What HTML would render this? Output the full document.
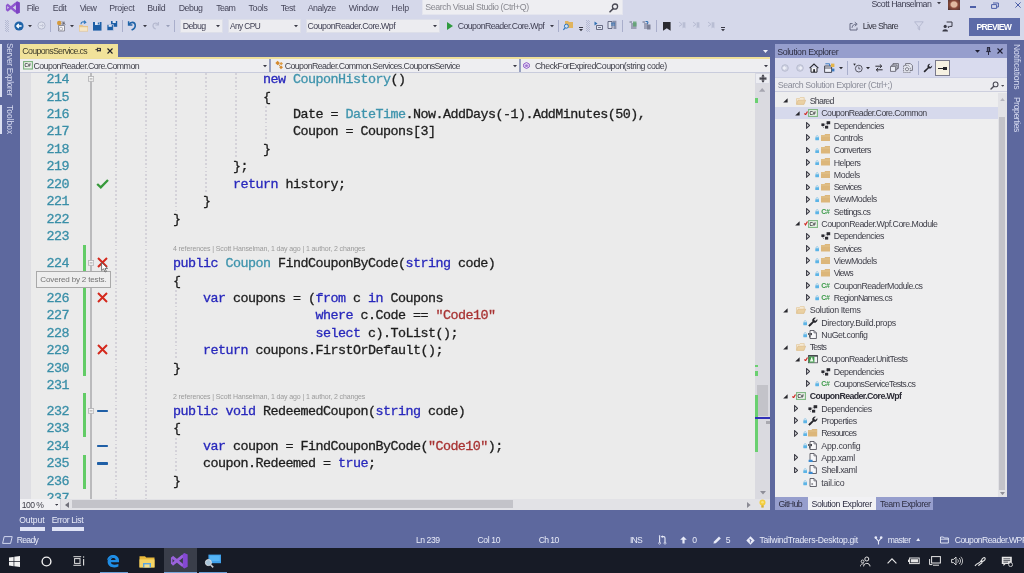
<!DOCTYPE html><html><head><meta charset="utf-8"><title>VS</title><style>
*{margin:0;padding:0;box-sizing:border-box}
html,body{width:1024px;height:573px;overflow:hidden;background:#5d689e;font-family:"Liberation Sans",sans-serif;}
body{position:relative;filter:blur(0.5px)}
.a{position:absolute}
.t{position:absolute;white-space:nowrap;line-height:1}
#top{left:0;top:0;width:1024px;height:39.6px;background:#d5d8ea}
.menu{font-size:8.6px;color:#2a2a3a;top:4px;letter-spacing:-0.15px}
.code{font-family:"Liberation Mono",monospace;font-size:13.4px;letter-spacing:-0.54px;white-space:pre;line-height:17.5px;color:#1e1e1e;-webkit-text-stroke:0.3px}
.ln{color:#3a8fa8}
.k{color:#2828bc}.ty{color:#3f94ad}.s{color:#a83232}
.lens{font-size:7px;color:#9a9a9a;letter-spacing:-0.12px}
.tree{font-size:8.8px;color:#2c2c34;letter-spacing:-0.2px}
.sb{font-size:8.4px;color:#e8ebf8;letter-spacing:-0.15px}
</style></head><body><div class="a" id="top"></div>
<svg class="a" style="left:0;top:0" width="24" height="16" viewBox="0 0 24 16"><path d="M6.9 4.4 L16.2 11.9 M6.9 10.9 L16.2 3.3" stroke="#9058cf" stroke-width="2.5" fill="none"/><path d="M6.6 4.8 V10.4" stroke="#9058cf" stroke-width="1.4"/><path d="M15.9 1.9 L17.1 1.2 L19.9 2.5 V12.7 L17.1 14 L15.9 13.3 Z" fill="#7d43c4"/></svg>
<div class="t " style="left:26.70px;top:4.1px;font-size:8.8px;letter-spacing:-0.477px;color:#46465a;">File</div>
<div class="t " style="left:52.70px;top:4.1px;font-size:8.8px;letter-spacing:-0.388px;color:#46465a;">Edit</div>
<div class="t " style="left:79.70px;top:4.1px;font-size:8.8px;letter-spacing:-0.555px;color:#46465a;">View</div>
<div class="t " style="left:109.20px;top:4.1px;font-size:8.8px;letter-spacing:-0.315px;color:#46465a;">Project</div>
<div class="t " style="left:147.20px;top:4.1px;font-size:8.8px;letter-spacing:-0.267px;color:#46465a;">Build</div>
<div class="t " style="left:178.70px;top:4.1px;font-size:8.8px;letter-spacing:-0.421px;color:#46465a;">Debug</div>
<div class="t " style="left:216.20px;top:4.1px;font-size:8.8px;letter-spacing:-0.590px;color:#46465a;">Team</div>
<div class="t " style="left:248.45px;top:4.1px;font-size:8.8px;letter-spacing:-0.261px;color:#46465a;">Tools</div>
<div class="t " style="left:280.70px;top:4.1px;font-size:8.8px;letter-spacing:-0.463px;color:#46465a;">Test</div>
<div class="t " style="left:307.70px;top:4.1px;font-size:8.8px;letter-spacing:-0.468px;color:#46465a;">Analyze</div>
<div class="t " style="left:348.70px;top:4.1px;font-size:8.8px;letter-spacing:-0.260px;color:#46465a;">Window</div>
<div class="t " style="left:391.45px;top:4.1px;font-size:8.8px;letter-spacing:-0.116px;color:#46465a;">Help</div>
<div class="a" style="left:422.3px;top:0px;width:201px;height:15.2px;background:#eeeef2;border:1px solid #e4e5ee;border-top:none"></div>
<div class="t " style="left:425.30px;top:3.4px;font-size:8.8px;letter-spacing:-0.415px;color:#88888f;">Search Visual Studio (Ctrl+Q)</div>
<svg class="a" style="left:609px;top:3px" width="10" height="10" viewBox="0 0 10 10"><circle cx="6" cy="3.6" r="2.6" fill="none" stroke="#4a4a55" stroke-width="1.3"/><path d="M4.2 5.6 L1 8.8" stroke="#4a4a55" stroke-width="1.6" stroke-linecap="round"/></svg>
<svg class="a" style="left:5px;top:20px" width="4" height="12" viewBox="0 0 4 12"><rect x="0" y="0" width="1" height="1" fill="#b4b9d2"/><rect x="2" y="0" width="1" height="1" fill="#b4b9d2"/><rect x="1" y="1" width="1" height="1" fill="#b4b9d2"/><rect x="3" y="1" width="1" height="1" fill="#b4b9d2"/><rect x="0" y="2" width="1" height="1" fill="#b4b9d2"/><rect x="2" y="2" width="1" height="1" fill="#b4b9d2"/><rect x="1" y="3" width="1" height="1" fill="#b4b9d2"/><rect x="3" y="3" width="1" height="1" fill="#b4b9d2"/><rect x="0" y="4" width="1" height="1" fill="#b4b9d2"/><rect x="2" y="4" width="1" height="1" fill="#b4b9d2"/><rect x="1" y="5" width="1" height="1" fill="#b4b9d2"/><rect x="3" y="5" width="1" height="1" fill="#b4b9d2"/><rect x="0" y="6" width="1" height="1" fill="#b4b9d2"/><rect x="2" y="6" width="1" height="1" fill="#b4b9d2"/><rect x="1" y="7" width="1" height="1" fill="#b4b9d2"/><rect x="3" y="7" width="1" height="1" fill="#b4b9d2"/><rect x="0" y="8" width="1" height="1" fill="#b4b9d2"/><rect x="2" y="8" width="1" height="1" fill="#b4b9d2"/><rect x="1" y="9" width="1" height="1" fill="#b4b9d2"/><rect x="3" y="9" width="1" height="1" fill="#b4b9d2"/><rect x="0" y="10" width="1" height="1" fill="#b4b9d2"/><rect x="2" y="10" width="1" height="1" fill="#b4b9d2"/><rect x="1" y="11" width="1" height="1" fill="#b4b9d2"/><rect x="3" y="11" width="1" height="1" fill="#b4b9d2"/></svg>
<svg class="a" style="left:14px;top:21px" width="10" height="10" viewBox="0 0 10 10"><circle cx="5" cy="5" r="4.6" fill="#1f63a8"/><path d="M7.6 5 H3 M4.8 3 L2.8 5 L4.8 7" stroke="#fff" stroke-width="1.3" fill="none"/></svg>
<svg class="a" style="left:28px;top:25.2px" width="4" height="3" viewBox="0 0 4 3"><path d="M0 0 H4 L2.0 2.2 Z" fill="#3a3a46"/></svg>
<svg class="a" style="left:36.5px;top:21px" width="9" height="9" viewBox="0 0 9 9"><circle cx="4.5" cy="4.5" r="3.6" fill="#dfe2ee" stroke="#b4b8cc" stroke-width="1"/><path d="M2.6 4.5 H6.4 M5 3 L6.5 4.5 L5 6" stroke="#c2c5d6" stroke-width="0.9" fill="none"/></svg>
<div class="a" style="left:50px;top:19.6px;width:1px;height:12px;background:#a9aecb;"></div>
<svg class="a" style="left:56px;top:20px" width="10" height="12" viewBox="0 0 10 12"><circle cx="3.2" cy="3" r="2.2" fill="#d59a3c"/><path d="M2.5 5.5 H8.5 V11 H2.5 Z" fill="#f4f4f6" stroke="#7a7a86" stroke-width="0.8"/><path d="M6 1.5 L9.2 4.7 M8 1.5 V4 H5.6" stroke="#555560" stroke-width="0.9" fill="none"/><circle cx="5" cy="8.8" r="1.6" fill="none" stroke="#9a9aa6" stroke-width="0.7"/></svg>
<svg class="a" style="left:70px;top:25.2px" width="4" height="3" viewBox="0 0 4 3"><path d="M0 0 H4 L2.0 2.2 Z" fill="#3a3a46"/></svg>
<svg class="a" style="left:78px;top:20px" width="11" height="12" viewBox="0 0 11 12"><path d="M1 5 H4.5 L5.5 6 H10 V11.5 H1 Z" fill="#e6c48a"/><path d="M1.6 7.2 H9.4 V10.9 H1.6 Z" fill="#f5e6c6"/><path d="M3 4.2 C3 2 5 1.4 7.2 2.2 M6.2 0.6 L7.8 2.3 L6 3.6" stroke="#2f78bd" stroke-width="1.1" fill="none"/></svg>
<svg class="a" style="left:93px;top:21.7px" width="9" height="9" viewBox="0 0 9 9"><path d="M0 0 H8.5 V8.6 H0 Z" fill="#1c5ea6"/><path d="M2 0 H6.6 V3 H2 Z" fill="#dfe6f4"/><path d="M4.8 0.5 H5.9 V2.5 H4.8 Z" fill="#1c5ea6"/></svg>
<svg class="a" style="left:106.8px;top:21.4px" width="11" height="10" viewBox="0 0 11 10"><path d="M4 0 H10.2 V5.8 H4 Z" fill="#1c5ea6"/><path d="M5.6 0 H8.8 V2 H5.6 Z" fill="#dfe6f4"/><path d="M0 3.6 H6.4 V9.6 H0 Z" fill="#1c5ea6" stroke="#d5d8ea" stroke-width="0.7"/><path d="M1.6 3.9 H4.8 V5.8 H1.6 Z" fill="#dfe6f4"/></svg>
<div class="a" style="left:121.5px;top:19.6px;width:1px;height:12px;background:#a9aecb;"></div>
<svg class="a" style="left:127px;top:20px" width="10" height="11" viewBox="0 0 10 11"><path d="M1.6 1.2 V5 H5.4" stroke="#1f63a8" stroke-width="1.5" fill="none"/><path d="M2 4.6 C3.5 1.6 7.6 1.6 8.2 4.8 C8.6 7.2 6.8 9 4.6 10" stroke="#1f63a8" stroke-width="1.6" fill="none"/></svg>
<svg class="a" style="left:142.5px;top:25.2px" width="4" height="3" viewBox="0 0 4 3"><path d="M0 0 H4 L2.0 2.2 Z" fill="#3a3a46"/></svg>
<svg class="a" style="left:150.6px;top:21px" width="9" height="9" viewBox="0 0 9 9"><path d="M7.4 1 V4 H4.4" stroke="#b6bad0" stroke-width="1.1" fill="none"/><path d="M7 3.8 C6 1.4 2.4 1.6 2 4.2 C1.8 6 3 7.4 4.8 8" stroke="#b6bad0" stroke-width="1.2" fill="none"/></svg>
<svg class="a" style="left:166px;top:25px" width="4" height="3" viewBox="0 0 4 3"><path d="M0 0 H4 L2.0 2.2 Z" fill="#9aa0ba"/></svg>
<div class="a" style="left:174px;top:19.6px;width:1px;height:12px;background:#a9aecb;"></div>
<div class="a" style="left:180px;top:18.8px;width:42.5px;height:13.8px;background:#ececf0;border:1px solid #dddfe9"></div>
<div class="t " style="left:182.70px;top:21.6px;font-size:8.8px;letter-spacing:-0.608px;color:#404054;">Debug</div>
<svg class="a" style="left:215.9px;top:25.2px" width="4" height="3" viewBox="0 0 4 3"><path d="M0 0 H4 L2.0 2.2 Z" fill="#3a3a46"/></svg>
<div class="a" style="left:227.5px;top:18.8px;width:73.5px;height:13.8px;background:#ececf0;border:1px solid #dddfe9"></div>
<div class="t " style="left:229.90px;top:21.900000000000002px;font-size:8.3px;letter-spacing:-0.539px;color:#404054;">Any CPU</div>
<svg class="a" style="left:294.4px;top:25.2px" width="4" height="3" viewBox="0 0 4 3"><path d="M0 0 H4 L2.0 2.2 Z" fill="#3a3a46"/></svg>
<div class="a" style="left:306px;top:18.8px;width:134px;height:13.8px;background:#ececf0;border:1px solid #dddfe9"></div>
<div class="t " style="left:307.45px;top:21.6px;font-size:8.8px;letter-spacing:-0.528px;color:#404054;">CouponReader.Core.Wpf</div>
<svg class="a" style="left:433.4px;top:25.2px" width="4" height="3" viewBox="0 0 4 3"><path d="M0 0 H4 L2.0 2.2 Z" fill="#3a3a46"/></svg>
<svg class="a" style="left:446.5px;top:21.5px" width="6" height="8" viewBox="0 0 6 8"><path d="M0 0 L6 4 L0 8 Z" fill="#2f9a3f"/></svg>
<div class="t " style="left:457.70px;top:21.6px;font-size:8.8px;letter-spacing:-0.591px;color:#404054;">CouponReader.Core.Wpf</div>
<svg class="a" style="left:549.6px;top:25.2px" width="4" height="3" viewBox="0 0 4 3"><path d="M0 0 H4 L2.0 2.2 Z" fill="#3a3a46"/></svg>
<div class="a" style="left:558px;top:19.6px;width:1px;height:12px;background:#a9aecb;"></div>
<svg class="a" style="left:563px;top:20px" width="10" height="11" viewBox="0 0 10 11"><path d="M2 1 H5 L6 2 H10 V8 H2 Z" fill="#e0b45e"/><circle cx="3.4" cy="6.2" r="2" fill="#cfe0f2" stroke="#2f78bd" stroke-width="1"/><path d="M2 7.8 L0.4 10" stroke="#2f78bd" stroke-width="1.2"/></svg>
<svg class="a" style="left:578.8px;top:26.6px" width="4" height="5" viewBox="0 0 4 5"><path d="M0 0 H4 V0.9 H0 Z M0 2 H4 L2 4.2 Z" fill="#3a3a46"/></svg>
<svg class="a" style="left:586px;top:20px" width="4" height="12" viewBox="0 0 4 12"><rect x="0" y="0" width="1" height="1" fill="#b4b9d2"/><rect x="2" y="0" width="1" height="1" fill="#b4b9d2"/><rect x="1" y="1" width="1" height="1" fill="#b4b9d2"/><rect x="3" y="1" width="1" height="1" fill="#b4b9d2"/><rect x="0" y="2" width="1" height="1" fill="#b4b9d2"/><rect x="2" y="2" width="1" height="1" fill="#b4b9d2"/><rect x="1" y="3" width="1" height="1" fill="#b4b9d2"/><rect x="3" y="3" width="1" height="1" fill="#b4b9d2"/><rect x="0" y="4" width="1" height="1" fill="#b4b9d2"/><rect x="2" y="4" width="1" height="1" fill="#b4b9d2"/><rect x="1" y="5" width="1" height="1" fill="#b4b9d2"/><rect x="3" y="5" width="1" height="1" fill="#b4b9d2"/><rect x="0" y="6" width="1" height="1" fill="#b4b9d2"/><rect x="2" y="6" width="1" height="1" fill="#b4b9d2"/><rect x="1" y="7" width="1" height="1" fill="#b4b9d2"/><rect x="3" y="7" width="1" height="1" fill="#b4b9d2"/><rect x="0" y="8" width="1" height="1" fill="#b4b9d2"/><rect x="2" y="8" width="1" height="1" fill="#b4b9d2"/><rect x="1" y="9" width="1" height="1" fill="#b4b9d2"/><rect x="3" y="9" width="1" height="1" fill="#b4b9d2"/><rect x="0" y="10" width="1" height="1" fill="#b4b9d2"/><rect x="2" y="10" width="1" height="1" fill="#b4b9d2"/><rect x="1" y="11" width="1" height="1" fill="#b4b9d2"/><rect x="3" y="11" width="1" height="1" fill="#b4b9d2"/></svg>
<svg class="a" style="left:594px;top:21px" width="9" height="9" viewBox="0 0 9 9"><path d="M0.5 0.5 L3.5 2.5 L0.5 4.5 Z" fill="#2f6fb2"/><path d="M2.5 4.5 H8.5 V8.5 H2.5 Z" fill="#dfe3ef" stroke="#5a5f78" stroke-width="0.9"/><path d="M4 6.5 H7" stroke="#5a5f78" stroke-width="0.8"/></svg>
<svg class="a" style="left:607px;top:20px" width="10" height="10" viewBox="0 0 10 10"><path d="M1 1.5 H5 V8.5 H1 Z" fill="#dfe3ef" stroke="#5a5f78" stroke-width="0.9"/><path d="M5.5 0.8 H9.4 V9 H6.5 V3 H5.5 Z" fill="#8c93ad"/><path d="M4 3.2 H8 M4 5 H8" stroke="#2f6fb2" stroke-width="0.9"/></svg>
<div class="a" style="left:622px;top:19.6px;width:1px;height:12px;background:#a9aecb;"></div>
<svg class="a" style="left:629px;top:21px" width="8" height="8" viewBox="0 0 8 8"><path d="M0.5 1 H3 M2 3 H7.5 M2 5 H7.5 M2 7 H7.5" stroke="#5a5f78" stroke-width="0.9"/><path d="M4 0.5 H7.5 V5.5 H4 Z" fill="#5aa36a" opacity="0.8"/></svg>
<svg class="a" style="left:642px;top:21px" width="9" height="9" viewBox="0 0 9 9"><path d="M0.5 1 H3 M2 3 H6 M2 5 H6 M2 7 H6" stroke="#5a5f78" stroke-width="0.9"/><path d="M5 3.5 H8.5 V8.5 H5 Z" fill="#7c8096"/><path d="M3.5 0.5 C6 0.2 6.5 1.5 5.2 2.8" stroke="#2f6fb2" stroke-width="1.1" fill="none"/></svg>
<div class="a" style="left:656.2px;top:19.6px;width:1px;height:12px;background:#a9aecb;"></div>
<svg class="a" style="left:662.5px;top:21.6px" width="8" height="9" viewBox="0 0 8 9"><path d="M0 0 H7.6 V8.8 L3.8 6.2 L0 8.8 Z" fill="#2a2a30"/></svg>
<svg class="a" style="left:678px;top:21px" width="8" height="8" viewBox="0 0 8 8"><path d="M1 1 L4 3.4 L1 5.4" stroke="#b3b8cf" stroke-width="0.9" fill="none"/><path d="M4.6 1.2 H7.4 V7.4 L6 6.2 L4.6 7.4 Z" fill="#b9bed4"/></svg>
<svg class="a" style="left:692px;top:21px" width="8" height="8" viewBox="0 0 8 8"><path d="M1 1 L4 3.4 L1 5.4" stroke="#b3b8cf" stroke-width="0.9" fill="none"/><path d="M4.6 1.2 H7.4 V7.4 L6 6.2 L4.6 7.4 Z" fill="#b9bed4"/></svg>
<svg class="a" style="left:706.5px;top:21px" width="8" height="8" viewBox="0 0 8 8"><path d="M1 1 L4 3.4 L1 5.4" stroke="#b3b8cf" stroke-width="0.9" fill="none"/><path d="M4.6 1.2 H7.4 V7.4 L6 6.2 L4.6 7.4 Z" fill="#b9bed4"/></svg>
<svg class="a" style="left:720.6px;top:26.6px" width="4" height="5" viewBox="0 0 4 5"><path d="M0 0 H4 V0.9 H0 Z M0 2 H4 L2 4.2 Z" fill="#3a3a46"/></svg>
<div class="t " style="left:871.45px;top:0.2px;font-size:8.8px;letter-spacing:-0.465px;color:#404054;">Scott Hanselman</div>
<svg class="a" style="left:937.2px;top:1.8px" width="4" height="3" viewBox="0 0 4 3"><path d="M0 0 H4 L2.0 2.2 Z" fill="#3a3a46"/></svg>
<div class="a" style="left:947.5px;top:0;width:12.5px;height:9.5px;background:radial-gradient(ellipse at 50% 45%,#e0b9a0 0 32%,#8a4a3a 50%,#4a3030 100%)"></div>
<div class="a" style="left:970px;top:6.4px;width:6.4px;height:1.8px;background:#4d5fa8;"></div>
<svg class="a" style="left:991px;top:1.5px" width="8" height="7" viewBox="0 0 8 7"><path d="M2 1 H7.4 V5 H6" stroke="#4d5fa8" stroke-width="1" fill="none"/><path d="M0.6 2.6 H5.6 V6.4 H0.6 Z" stroke="#4d5fa8" stroke-width="1" fill="none"/></svg>
<svg class="a" style="left:1015px;top:2px" width="6" height="6" viewBox="0 0 6 6"><path d="M0.4 0.4 L5.6 5.6 M5.6 0.4 L0.4 5.6" stroke="#4d5fa8" stroke-width="1"/></svg>
<svg class="a" style="left:849px;top:20.5px" width="10" height="10" viewBox="0 0 10 10"><path d="M3.6 2.6 H1 V9 H8 V6.6" stroke="#5a5f78" stroke-width="0.9" fill="none"/><path d="M3 6.8 C3.4 4.2 5 3.2 7 3.2 M5.8 1.2 L8.2 3.2 L5.8 5.2" stroke="#5a5f78" stroke-width="0.9" fill="none"/></svg>
<div class="t " style="left:862.70px;top:21.6px;font-size:8.8px;letter-spacing:-0.675px;color:#33333f;">Live Share</div>
<svg class="a" style="left:913.5px;top:21px" width="10" height="10" viewBox="0 0 10 10"><path d="M0.6 0.8 H9.2 L5.6 5.4 V9 L4.2 8 V5.4 Z" stroke="#aeb3ca" stroke-width="0.8" fill="none"/></svg>
<svg class="a" style="left:942px;top:20.5px" width="11" height="11" viewBox="0 0 11 11"><circle cx="3.2" cy="5.4" r="1.6" fill="#3a3a46"/><path d="M0.4 10.4 C0.4 7.4 6 7.4 6 10.4 Z" fill="#3a3a46"/><path d="M4.6 1 H10 V5.4 H7.6 L6.4 6.8 V5.4 H5.8" stroke="#3a3a46" stroke-width="1" fill="none"/></svg>
<div class="a" style="left:968.5px;top:18px;width:51px;height:18px;background:#5c6aa8;"></div>
<div class="t " style="left:976.45px;top:23.4px;font-size:8.6px;letter-spacing:-0.694px;font-weight:bold;color:#fff;">PREVIEW</div>
<div class="a" style="left:0px;top:44.3px;width:2.4px;height:52.8px;background:#dde1f2;"></div>
<div class="a" style="left:0px;top:105.2px;width:2.4px;height:28.8px;background:#dde1f2;"></div>
<div class="t" style="left:13.8px;top:43.45px;transform-origin:0 0;transform:rotate(90deg);font-size:8.4px;letter-spacing:-0.329px;color:#d6daf0">Server Explorer</div>
<div class="t" style="left:13.8px;top:104.7px;transform-origin:0 0;transform:rotate(90deg);font-size:8.4px;letter-spacing:0.049px;color:#d6daf0">Toolbox</div>
<div class="a" style="left:20px;top:57px;width:750px;height:1.7px;background:#efe09a;"></div>
<div class="a" style="left:20px;top:44px;width:98px;height:14px;background:#f1e29a;"></div>
<div class="t " style="left:22.20px;top:46.8px;font-size:8.8px;letter-spacing:-0.645px;color:#3e3c2c;">CouponsService.cs</div>
<svg class="a" style="left:95px;top:47px" width="7" height="6" viewBox="0 0 7 6"><path d="M0.4 2.6 H2.4 M2.4 0.8 V4.6 M2.4 1.4 H5.4 V3.8 H2.4 M5.4 1 V4.4" stroke="#2a2a30" stroke-width="0.9" fill="none"/><path d="M2.6 3 H5.4 V3.8 H2.6Z" fill="#2a2a30"/></svg>
<svg class="a" style="left:107px;top:47.5px" width="6" height="6" viewBox="0 0 6 6"><path d="M0.5 0.5 L5.5 5.5 M5.5 0.5 L0.5 5.5" stroke="#1e1e28" stroke-width="1.1"/></svg>
<svg class="a" style="left:763px;top:49.6px" width="5" height="3" viewBox="0 0 5 3"><path d="M0 0 H5 L2.5 3 Z" fill="#eef0fa"/></svg>
<div class="a" style="left:20px;top:58.6px;width:750px;height:13.9px;background:#eeeef1;"></div>
<div class="a" style="left:20px;top:72px;width:750px;height:0.8px;background:#c9ccdc;"></div>
<div class="a" style="left:268.5px;top:59px;width:2.2px;height:13px;background:#98a0c0;"></div>
<div class="a" style="left:518.8px;top:59px;width:2.2px;height:13px;background:#98a0c0;"></div>
<svg class="a" style="left:22.8px;top:61px" width="10" height="8.6" viewBox="0 0 10 8.6"><rect x="0.6" y="0.6" width="8.8" height="7.4" fill="#eef3ec" stroke="#7ab07c" stroke-width="1.1"/><text x="1.6" y="6.2" font-family="Liberation Sans" font-size="4.8" font-weight="bold" fill="#3a3a40">C#</text></svg>
<div class="t " style="left:33.45px;top:61.6px;font-size:8.8px;letter-spacing:-0.549px;color:#3e3e48;">CouponReader.Core.Common</div>
<svg class="a" style="left:263px;top:65px" width="4" height="3" viewBox="0 0 4 3"><path d="M0 0 H4 L2.0 2.2 Z" fill="#3a3a46"/></svg>
<svg class="a" style="left:273.6px;top:60.4px" width="10" height="10" viewBox="0 0 10 10"><path d="M1.4 3 L3.6 0.8 L5.8 3 L3.6 5.2 Z" fill="#d68a2e"/><path d="M5.4 3.4 L7.2 2 L9 3.6 L7.2 5.2 Z" fill="#dc9a44"/><path d="M5.2 7.2 L7 5.4 L9 7.2 L7 9.2 Z" fill="#d68a2e"/><path d="M4.6 4.2 L6.2 6.4" stroke="#c88a3a" stroke-width="0.9"/></svg>
<div class="t " style="left:284.70px;top:61.6px;font-size:8.8px;letter-spacing:-0.591px;color:#3e3e48;">CouponReader.Common.Services.CouponsService</div>
<svg class="a" style="left:512.5px;top:65px" width="4" height="3" viewBox="0 0 4 3"><path d="M0 0 H4 L2.0 2.2 Z" fill="#3a3a46"/></svg>
<svg class="a" style="left:523.4px;top:61.8px" width="7" height="7" viewBox="0 0 7 7"><path d="M3.5 0.5 L6.3 2 V5 L3.5 6.5 L0.7 5 V2 Z" fill="#e6dcf6" stroke="#8a52c4" stroke-width="0.9"/><path d="M3.5 2.2 L4.9 3 V4.4 L3.5 5.1 L2.1 4.4 V3 Z" fill="#8a52c4" opacity="0.75"/></svg>
<div class="t " style="left:534.95px;top:61.6px;font-size:8.8px;letter-spacing:-0.469px;color:#3e3e48;">CheckForExpiredCoupon(string code)</div>
<svg class="a" style="left:763.5px;top:65px" width="4" height="3" viewBox="0 0 4 3"><path d="M0 0 H4 L2.0 2.2 Z" fill="#3a3a46"/></svg>
<div class="a" style="left:20px;top:72.8px;width:750px;height:426.2px;background:#ebebeb;"></div>
<div class="a" style="left:20px;top:72.8px;width:11px;height:426.2px;background:#dedee3;"></div>
<div class="a" style="left:90.3px;top:72.8px;width:1.6px;height:426.2px;background:#bababc;"></div>
<div class="a" style="left:115.15px;top:72.80px;width:1.5px;height:426.20px;background:repeating-linear-gradient(180deg,#d4d2d9 0 1.8px,transparent 1.8px 3.9px)"></div>
<div class="a" style="left:145.15px;top:72.80px;width:1.5px;height:426.20px;background:repeating-linear-gradient(180deg,#d4d2d9 0 1.8px,transparent 1.8px 3.9px)"></div>
<div class="a" style="left:175.15px;top:72.80px;width:1.5px;height:137.84px;background:repeating-linear-gradient(180deg,#d4d2d9 0 1.8px,transparent 1.8px 3.9px)"></div>
<div class="a" style="left:205.15px;top:72.80px;width:1.5px;height:120.41px;background:repeating-linear-gradient(180deg,#d4d2d9 0 1.8px,transparent 1.8px 3.9px)"></div>
<div class="a" style="left:235.15px;top:72.80px;width:1.5px;height:85.55px;background:repeating-linear-gradient(180deg,#d4d2d9 0 1.8px,transparent 1.8px 3.9px)"></div>
<div class="a" style="left:265.15px;top:106.06px;width:1.5px;height:34.86px;background:repeating-linear-gradient(180deg,#d4d2d9 0 1.8px,transparent 1.8px 3.9px)"></div>
<div class="a" style="left:175.15px;top:290.10px;width:1.5px;height:69.60px;background:repeating-linear-gradient(180deg,#d4d2d9 0 1.8px,transparent 1.8px 3.9px)"></div>
<div class="a" style="left:175.15px;top:437.70px;width:1.5px;height:35.00px;background:repeating-linear-gradient(180deg,#d4d2d9 0 1.8px,transparent 1.8px 3.9px)"></div>
<div class="a" style="left:20px;top:72.8px;width:735px;height:426.2px;overflow:hidden">
<div class="t code ln" style="left:26.6px;top:-1.5999999999999943px">214</div>
<div class="t code" style="left:243.0px;top:-1.5999999999999943px"><span class="k">new</span> <span class="ty">CouponHistory</span>()</div>
<div class="t code ln" style="left:26.6px;top:15.829999999999998px">215</div>
<div class="t code" style="left:243.0px;top:15.829999999999998px">{</div>
<div class="t code ln" style="left:26.6px;top:33.260000000000005px">216</div>
<div class="t code" style="left:273.0px;top:33.260000000000005px">Date = <span class="ty">DateTime</span>.Now.AddDays(-1).AddMinutes(50),</div>
<div class="t code ln" style="left:26.6px;top:50.69000000000001px">217</div>
<div class="t code" style="left:273.0px;top:50.69000000000001px">Coupon = Coupons[3]</div>
<div class="t code ln" style="left:26.6px;top:68.11999999999999px">218</div>
<div class="t code" style="left:243.0px;top:68.11999999999999px">}</div>
<div class="t code ln" style="left:26.6px;top:85.55px">219</div>
<div class="t code" style="left:213.0px;top:85.55px">};</div>
<div class="t code ln" style="left:26.6px;top:102.98px">220</div>
<div class="t code" style="left:213.0px;top:102.98px"><span class="k">return</span> history;</div>
<div class="t code ln" style="left:26.6px;top:120.41000000000001px">221</div>
<div class="t code" style="left:183.0px;top:120.41000000000001px">}</div>
<div class="t code ln" style="left:26.6px;top:137.84000000000003px">222</div>
<div class="t code" style="left:153.0px;top:137.84000000000003px">}</div>
<div class="t code ln" style="left:26.6px;top:155.27000000000004px">223</div>
<div class="t code ln" style="left:26.6px;top:182.5px">224</div>
<div class="t code" style="left:153.0px;top:182.5px"><span class="k">public</span> <span class="ty">Coupon</span> FindCouponByCode(<span class="k">string</span> code)</div>
<div class="t code ln" style="left:26.6px;top:199.89999999999992px">225</div>
<div class="t code" style="left:153.0px;top:199.89999999999992px">{</div>
<div class="t code ln" style="left:26.6px;top:217.29999999999995px">226</div>
<div class="t code" style="left:183.0px;top:217.29999999999995px"><span class="k">var</span> coupons = (<span class="k">from</span> c <span class="k">in</span> Coupons</div>
<div class="t code ln" style="left:26.6px;top:234.69999999999993px">227</div>
<div class="t code" style="left:295.5px;top:234.69999999999993px"><span class="k">where</span> c.Code == <span class="s">"Code10"</span></div>
<div class="t code ln" style="left:26.6px;top:252.09999999999997px">228</div>
<div class="t code" style="left:295.5px;top:252.09999999999997px"><span class="k">select</span> c).ToList();</div>
<div class="t code ln" style="left:26.6px;top:269.49999999999994px">229</div>
<div class="t code" style="left:183.0px;top:269.49999999999994px"><span class="k">return</span> coupons.FirstOrDefault();</div>
<div class="t code ln" style="left:26.6px;top:286.8999999999999px">230</div>
<div class="t code" style="left:153.0px;top:286.8999999999999px">}</div>
<div class="t code ln" style="left:26.6px;top:304.2999999999999px">231</div>
<div class="t code ln" style="left:26.6px;top:329.9px">232</div>
<div class="t code" style="left:153.0px;top:329.9px"><span class="k">public</span> <span class="k">void</span> RedeemedCoupon(<span class="k">string</span> code)</div>
<div class="t code ln" style="left:26.6px;top:347.4px">233</div>
<div class="t code" style="left:153.0px;top:347.4px">{</div>
<div class="t code ln" style="left:26.6px;top:364.9px">234</div>
<div class="t code" style="left:183.0px;top:364.9px"><span class="k">var</span> coupon = FindCouponByCode(<span class="s">"Code10"</span>);</div>
<div class="t code ln" style="left:26.6px;top:382.4px">235</div>
<div class="t code" style="left:183.0px;top:382.4px">coupon.Redeemed = <span class="k">true</span>;</div>
<div class="t code ln" style="left:26.6px;top:399.9px">236</div>
<div class="t code" style="left:153.0px;top:399.9px">}</div>
<div class="t code ln" style="left:26.6px;top:417.4px">237</div>
</div>
<div class="t lens" style="left:173px;top:245px;">4 references | Scott Hanselman, 1 day ago | 1 author, 2 changes</div>
<div class="t lens" style="left:173px;top:393px;">2 references | Scott Hanselman, 1 day ago | 1 author, 2 changes</div>
<div class="a" style="left:83px;top:244.5px;width:3.4px;height:131.10000000000002px;background:#62cc66;"></div>
<div class="a" style="left:83px;top:393px;width:3.4px;height:44px;background:#62cc66;"></div>
<div class="a" style="left:83px;top:455px;width:3.4px;height:34.30000000000001px;background:#62cc66;"></div>
<svg class="a" style="left:88px;top:75.75px" width="6.2" height="6" viewBox="0 0 6.2 6"><rect x="0.5" y="0.5" width="5.2" height="4.8" fill="#f4f4f4" stroke="#b6b6b8" stroke-width="0.9"/><path d="M1.7 2.9 H4.5" stroke="#8a8a8a" stroke-width="0.8"/></svg>
<svg class="a" style="left:88px;top:259.5px" width="6.2" height="6" viewBox="0 0 6.2 6"><rect x="0.5" y="0.5" width="5.2" height="4.8" fill="#f4f4f4" stroke="#b6b6b8" stroke-width="0.9"/><path d="M1.7 2.9 H4.5" stroke="#8a8a8a" stroke-width="0.8"/></svg>
<svg class="a" style="left:88px;top:408.0px" width="6.2" height="6" viewBox="0 0 6.2 6"><rect x="0.5" y="0.5" width="5.2" height="4.8" fill="#f4f4f4" stroke="#b6b6b8" stroke-width="0.9"/><path d="M1.7 2.9 H4.5" stroke="#8a8a8a" stroke-width="0.8"/></svg>
<svg class="a" style="left:97px;top:257.0px" width="11" height="11" viewBox="0 0 11 11"><path d="M1 1 L10 10 M10 1 L1 10" stroke="#d4281c" stroke-width="2"/></svg>
<svg class="a" style="left:97px;top:291.8px" width="11" height="11" viewBox="0 0 11 11"><path d="M1 1 L10 10 M10 1 L1 10" stroke="#d4281c" stroke-width="2"/></svg>
<svg class="a" style="left:97px;top:344.0px" width="11" height="11" viewBox="0 0 11 11"><path d="M1 1 L10 10 M10 1 L1 10" stroke="#d4281c" stroke-width="2"/></svg>
<div class="a" style="left:97px;top:409.95000000000005px;width:11px;height:2.3px;background:#1f5fa6;border-radius:0.8px"></div>
<div class="a" style="left:97px;top:444.95000000000005px;width:11px;height:2.3px;background:#1f5fa6;border-radius:0.8px"></div>
<div class="a" style="left:97px;top:462.45000000000005px;width:11px;height:2.3px;background:#1f5fa6;border-radius:0.8px"></div>
<svg class="a" style="left:96px;top:179.48px" width="13" height="10" viewBox="0 0 13 10"><path d="M1.2 5 L4.8 8.3 L12 1" stroke="#36993a" stroke-width="2.3" fill="none"/></svg>
<div class="a" style="left:35.5px;top:271px;width:75.5px;height:17.2px;background:#eeeeee;border:1px solid #a9a9a9"></div>
<div class="t " style="left:40.30px;top:275.8px;font-size:8.1px;letter-spacing:-0.188px;color:#747474;">Covered by 2 tests.</div>
<svg class="a" style="left:100.5px;top:262px" width="8" height="11" viewBox="0 0 8 11"><path d="M0.6 0.6 V8.6 L2.6 6.8 L4 10 L5.4 9.4 L4 6.4 H6.6 Z" fill="#fff" stroke="#555" stroke-width="0.8"/></svg>
<div class="a" style="left:755px;top:72.8px;width:15.2px;height:426.2px;background:#dadae0;"></div>
<div class="a" style="left:754.8px;top:72.9px;width:15.4px;height:10.8px;background:#ecedf2;border:1px solid #d8d9e2"></div>
<svg class="a" style="left:758.5px;top:74px" width="8" height="9" viewBox="0 0 8 9"><rect x="0.5" y="3.4" width="7" height="2.3" fill="#4a4a52"/><path d="M4 0.3 L5.7 2.5 H2.3 Z M4 8.8 L5.7 6.6 H2.3 Z" fill="#3a3a42"/><path d="M4 2 V7" stroke="#3a3a42" stroke-width="1"/></svg>
<svg class="a" style="left:759px;top:88px" width="6.4" height="3.8" viewBox="0 0 6.4 3.8"><path d="M0 3.8 L3.2 0 L6.4 3.8 Z" fill="#a6a6b0"/></svg>
<svg class="a" style="left:759.5px;top:491px" width="6" height="3.5" viewBox="0 0 6 3.5"><path d="M0 0 H6 L3 3.5 Z" fill="#8e8e98"/></svg>
<div class="a" style="left:757px;top:384.5px;width:10.5px;height:31px;background:#c3c3c9;"></div>
<div class="a" style="left:755.4px;top:98.3px;width:3px;height:4.900000000000006px;background:#6ad070;"></div>
<div class="a" style="left:755.4px;top:364.8px;width:3px;height:2.6999999999999886px;background:#6ad070;"></div>
<div class="a" style="left:755.4px;top:371.4px;width:3px;height:5.100000000000023px;background:#6ad070;"></div>
<div class="a" style="left:755.4px;top:394.8px;width:3px;height:57.19999999999999px;background:#6ad070;"></div>
<div class="a" style="left:755px;top:417px;width:15px;height:1.9px;background:#3030b8;"></div>
<div class="a" style="left:766.4px;top:420.5px;width:3.6px;height:3.2px;background:#a9a9b0;"></div>
<div class="a" style="left:20px;top:499px;width:750px;height:10.5px;background:#e2e2e6;"></div>
<div class="a" style="left:20px;top:499px;width:40.5px;height:10.5px;background:#f0f0f3;border-right:1px solid #d0d0d6"></div>
<div class="t " style="left:21.70px;top:500.6px;font-size:8.6px;letter-spacing:-0.534px;color:#3e3e48;">100 %</div>
<svg class="a" style="left:54.8px;top:503.8px" width="3.2" height="3" viewBox="0 0 3.2 3"><path d="M0 0 H3.2 L1.6 1.7600000000000002 Z" fill="#3a3a46"/></svg>
<svg class="a" style="left:65px;top:501.5px" width="4" height="6" viewBox="0 0 4 6"><path d="M4 0 V6 L0 3 Z" fill="#70707a"/></svg>
<div class="a" style="left:72px;top:500.2px;width:441px;height:8.2px;background:#c3c3c9;"></div>
<svg class="a" style="left:747px;top:501.5px" width="4" height="6" viewBox="0 0 4 6"><path d="M0 0 V6 L3.6 3 Z" fill="#8a8a94"/></svg>
<svg class="a" style="left:759.3px;top:499px" width="7" height="9.4" viewBox="0 0 7 9.4"><circle cx="3.5" cy="3.4" r="3" fill="#f3cd3c"/><circle cx="3.5" cy="3.2" r="1.3" fill="#f9e27e"/><rect x="2.3" y="6.2" width="2.4" height="2.4" fill="#d8ae2c"/></svg>
<div class="a" style="left:775px;top:44px;width:232.4px;height:14px;background:#969ecd;"></div>
<div class="t " style="left:777.20px;top:47.6px;font-size:8.8px;letter-spacing:-0.345px;color:#2e2e42;">Solution Explorer</div>
<svg class="a" style="left:974.8px;top:49.6px" width="5" height="3" viewBox="0 0 5 3"><path d="M0 0 H5 L2.5 2.75 Z" fill="#1c1c30"/></svg>
<svg class="a" style="left:985.6px;top:46.9px" width="5" height="8.4" viewBox="0 0 5 8.4"><path d="M1 0.6 H4 M1.4 0.6 V4.4 M3.6 0.6 V4.4 M3 0.6 V4.4 M0.2 4.6 H4.8 M2.5 4.6 V8.4" stroke="#1c1c30" stroke-width="0.9" fill="none"/></svg>
<svg class="a" style="left:996.8px;top:47.8px" width="6" height="6" viewBox="0 0 6 6"><path d="M0.5 0.5 L5.5 5.5 M5.5 0.5 L0.5 5.5" stroke="#1c1c30" stroke-width="1.1"/></svg>
<div class="a" style="left:775px;top:58px;width:232.4px;height:19.8px;background:#d9dbee;"></div>
<svg class="a" style="left:781px;top:63.5px" width="8" height="8" viewBox="0 0 8 8"><circle cx="4" cy="4" r="3.3" fill="#cfd2e2" stroke="#b6bace" stroke-width="0.9"/><path d="M5.4 4 H2.4 M3.8 2.6 L2.3 4 L3.8 5.4" stroke="#eef0f8" stroke-width="1.3" fill="none"/></svg>
<svg class="a" style="left:795.5px;top:63.5px" width="8" height="8" viewBox="0 0 8 8"><circle cx="4" cy="4" r="3.3" fill="#cfd2e2" stroke="#b6bace" stroke-width="0.9"/><path d="M2.6 4 H5.6 M4.2 2.6 L5.7 4 L4.2 5.4" stroke="#eef0f8" stroke-width="1.3" fill="none"/></svg>
<svg class="a" style="left:809px;top:62.5px" width="10" height="10" viewBox="0 0 10 10"><path d="M0.6 5.2 L5 1 L9.4 5.2" stroke="#2a2a30" stroke-width="1.1" fill="none"/><path d="M2 4.8 V9.2 H8 V4.8" stroke="#2a2a30" stroke-width="1" fill="#f4f4f8"/><rect x="4.2" y="6.2" width="1.8" height="3" fill="#2a2a30"/></svg>
<svg class="a" style="left:824px;top:62.5px" width="11" height="10" viewBox="0 0 11 10"><path d="M0.6 3 H7.6 V9.4 H0.6 Z" fill="#eef0f8" stroke="#3a3a46" stroke-width="0.9"/><path d="M0.6 5 H7.6" stroke="#3a3a46" stroke-width="0.8"/><path d="M1.4 0.8 H5.6 V3" stroke="#3a7ac0" stroke-width="1" fill="none"/><rect x="7" y="0.6" width="3.4" height="3.4" fill="#e4b54a"/><rect x="7.8" y="5.6" width="2.6" height="2.8" fill="#3a7ac0"/></svg>
<svg class="a" style="left:838.5px;top:67px" width="4" height="3" viewBox="0 0 4 3"><path d="M0 0 H4 L2.0 2.2 Z" fill="#2a2a30"/></svg>
<div class="a" style="left:846.5px;top:61px;width:1px;height:14px;background:#a9afcc;"></div>
<svg class="a" style="left:852.5px;top:62.5px" width="11" height="10" viewBox="0 0 11 10"><circle cx="5.8" cy="5.6" r="3.4" fill="none" stroke="#4a4a56" stroke-width="0.9"/><path d="M5.8 3.6 V5.8 H7.4" stroke="#4a4a56" stroke-width="0.8" fill="none"/><path d="M0.4 0.4 L3 0.8 L1.2 2.8 Z" fill="#2a2a30"/></svg>
<svg class="a" style="left:866px;top:67px" width="4" height="3" viewBox="0 0 4 3"><path d="M0 0 H4 L2.0 2.2 Z" fill="#2a2a30"/></svg>
<svg class="a" style="left:875px;top:63.5px" width="8" height="8" viewBox="0 0 8 8"><path d="M0.4 2.2 H6.6 M4.8 0.4 L6.8 2.2 L4.8 4 M7.6 5.8 H1.4 M3.2 4 L1.2 5.8 L3.2 7.6" stroke="#2a2a30" stroke-width="1" fill="none"/></svg>
<svg class="a" style="left:889.5px;top:63px" width="9" height="9" viewBox="0 0 9 9"><path d="M3 0.6 H8.4 V5.4 H3 Z" fill="#d6d9e6" stroke="#5a5a66" stroke-width="0.8"/><path d="M1.8 2 H7 V6.8 H1.8 Z" fill="#d6d9e6" stroke="#5a5a66" stroke-width="0.8"/><path d="M0.5 3.4 H5.6 V8.4 H0.5 Z" fill="#e9ebf4" stroke="#5a5a66" stroke-width="0.8"/></svg>
<svg class="a" style="left:903px;top:62.5px" width="10" height="10" viewBox="0 0 10 10"><path d="M2.6 0.6 H7.4 L9.4 2.6 V7.4 H2.6 Z" fill="#e9ebf4" stroke="#5a5a66" stroke-width="0.8"/><path d="M0.6 2.6 H5.4 L7.2 4.4 V9.4 H0.6 Z" fill="#e9ebf4" stroke="#5a5a66" stroke-width="0.8" stroke-dasharray="1.2 0.8"/><circle cx="4" cy="6.2" r="1.6" fill="none" stroke="#5a5a66" stroke-width="0.7"/></svg>
<div class="a" style="left:918px;top:61px;width:1px;height:14px;background:#a9afcc;"></div>
<svg class="a" style="left:923px;top:62.5px" width="10" height="10" viewBox="0 0 10 10"><path d="M9.2 2.6 A2.7 2.7 0 0 1 5.6 5.4 L2 9.2 A0.9 0.9 0 0 1 0.8 8 L4.6 4.4 A2.7 2.7 0 0 1 7.4 0.8 L5.9 2.4 L6.4 3.6 L7.6 4.1 Z" fill="#26262c"/></svg>
<div class="a" style="left:935px;top:59.5px;width:15px;height:16px;background:#f6f1e2;border:1px solid #7a7a8c"></div>
<div class="a" style="left:938px;top:68.2px;width:9px;height:1.2px;background:#26262c;"></div>
<div class="a" style="left:942.5px;top:67.2px;width:4.5px;height:2.6px;background:#26262c;"></div>
<div class="a" style="left:775px;top:77px;width:232.4px;height:15px;background:#ececf0;border-top:1px solid #cdd0e4;border-bottom:1px solid #cdcfde"></div>
<div class="t " style="left:777.70px;top:80.8px;font-size:8.8px;letter-spacing:-0.376px;color:#8a8c98;">Search Solution Explorer (Ctrl+;)</div>
<svg class="a" style="left:989.5px;top:80.5px" width="9" height="9" viewBox="0 0 9 9"><circle cx="5.6" cy="3.4" r="2.4" fill="none" stroke="#4a4a55" stroke-width="1.1"/><path d="M3.8 5.2 L1 8" stroke="#4a4a55" stroke-width="1.4" stroke-linecap="round"/></svg>
<svg class="a" style="left:1001px;top:84.5px" width="3.4" height="3" viewBox="0 0 3.4 3"><path d="M0 0 H3.4 L1.7 1.87 Z" fill="#4a4a55"/></svg>
<div class="a" style="left:775px;top:92px;width:232.4px;height:405px;background:#eeeeef;"></div>
<div class="a" style="left:997.5px;top:92.5px;width:9.5px;height:404.5px;background:#e2e2e6;"></div>
<div class="a" style="left:999.3px;top:117px;width:6.2px;height:373px;background:#c3c3c9;"></div>
<svg class="a" style="left:1000px;top:98px" width="5" height="3.2" viewBox="0 0 5 3.2"><path d="M0 3.2 L2.5 0 L5 3.2 Z" fill="#b5b5be"/></svg>
<svg class="a" style="left:1000px;top:491.5px" width="5" height="3.2" viewBox="0 0 5 3.2"><path d="M0 0 H5 L2.5 3.2 Z" fill="#8e8e98"/></svg>
<div class="a" style="left:775px;top:106.8px;width:222.5px;height:12.2px;background:#d6d9ec;"></div>
<svg class="a" style="left:782.5px;top:98.35px" width="5" height="5" viewBox="0 0 5 5"><path d="M4.6 0.2 V4.6 H0.2 Z" fill="#26262c"/></svg>
<svg class="a" style="left:796.1px;top:96.75px" width="10" height="8" viewBox="0 0 10 8"><path d="M0.5 7.2 V1.6 H3.4 L4.2 0.6 H8.2 V3" fill="#f6ecd8" stroke="#e2c9a0" stroke-width="0.8"/><path d="M0.5 7.4 L2 3.2 H9.6 L8 7.4 Z" fill="#ead0a2" stroke="#dcbc8a" stroke-width="0.7"/></svg>
<div class="t " style="left:809.70px;top:96.95px;font-size:8.8px;letter-spacing:-0.726px;color:#3e3e48;">Shared</div>
<svg class="a" style="left:794.8px;top:110.66px" width="5" height="5" viewBox="0 0 5 5"><path d="M4.6 0.2 V4.6 H0.2 Z" fill="#26262c"/></svg>
<svg class="a" style="left:804.1999999999999px;top:110.66px" width="4" height="4.6" viewBox="0 0 4 4.6"><path d="M0.5 2.4 L1.5 3.8 L3.5 0.5" stroke="#d02a20" stroke-width="1.2" fill="none"/></svg>
<svg class="a" style="left:808.4px;top:109.06px" width="10" height="8" viewBox="0 0 10 8"><rect x="0.5" y="0.5" width="9" height="7" fill="#eef3ec" stroke="#82b884" stroke-width="1.3"/><text x="1.6" y="6" font-family="Liberation Sans" font-size="4.8" font-weight="bold" fill="#2a2a30">C#</text></svg>
<div class="t " style="left:821.30px;top:109.26px;font-size:8.8px;letter-spacing:-0.564px;color:#3e3e48;">CouponReader.Core.Common</div>
<svg class="a" style="left:806.1px;top:121.97px" width="4.4" height="6.8" viewBox="0 0 4.4 6.8"><path d="M0.6 0.7 L3.6 3.4 L0.6 6.1 Z" fill="none" stroke="#3a3a44" stroke-width="1.1"/></svg>
<svg class="a" style="left:820.7px;top:121.37px" width="10" height="8" viewBox="0 0 10 8"><rect x="5.6" y="0.2" width="3.6" height="3" fill="#2a2a30"/><rect x="0.4" y="2.4" width="3" height="2.6" fill="#2a2a30"/><rect x="4" y="4.8" width="3.2" height="2.8" fill="#2a2a30"/><path d="M1.6 5 L3 7.2 M3.4 3.6 L5.8 2.4 M6.8 3.2 L5.8 4.8" stroke="#55555e" stroke-width="0.7" stroke-dasharray="0.9 0.6"/></svg>
<div class="t " style="left:833.80px;top:121.57000000000001px;font-size:8.8px;letter-spacing:-0.510px;color:#3e3e48;">Dependencies</div>
<svg class="a" style="left:806.1px;top:134.28px" width="4.4" height="6.8" viewBox="0 0 4.4 6.8"><path d="M0.6 0.7 L3.6 3.4 L0.6 6.1 Z" fill="none" stroke="#3a3a44" stroke-width="1.1"/></svg>
<svg class="a" style="left:814.9000000000001px;top:135.28px" width="4.4" height="5.6" viewBox="0 0 4.4 5.6"><path d="M1.1 2.4 V1.7 A1.1 1.1 0 0 1 3.3 1.7 V2.4" stroke="#8cc8ea" stroke-width="0.8" fill="none"/><rect x="0.3" y="2.2" width="3.8" height="3" rx="0.5" fill="#5cb4e6"/></svg>
<svg class="a" style="left:820.7px;top:133.68px" width="9.5" height="7.6" viewBox="0 0 9.5 7.6"><path d="M0 1 H3.4 L4.2 0 H9.2 V7.4 H0 Z" fill="#dcb67a"/><path d="M0 2 H9.2" stroke="#e9cf9f" stroke-width="0.6"/></svg>
<div class="t " style="left:833.80px;top:133.88px;font-size:8.8px;letter-spacing:-0.481px;color:#3e3e48;">Controls</div>
<svg class="a" style="left:806.1px;top:146.59px" width="4.4" height="6.8" viewBox="0 0 4.4 6.8"><path d="M0.6 0.7 L3.6 3.4 L0.6 6.1 Z" fill="none" stroke="#3a3a44" stroke-width="1.1"/></svg>
<svg class="a" style="left:814.9000000000001px;top:147.59px" width="4.4" height="5.6" viewBox="0 0 4.4 5.6"><path d="M1.1 2.4 V1.7 A1.1 1.1 0 0 1 3.3 1.7 V2.4" stroke="#8cc8ea" stroke-width="0.8" fill="none"/><rect x="0.3" y="2.2" width="3.8" height="3" rx="0.5" fill="#5cb4e6"/></svg>
<svg class="a" style="left:820.7px;top:145.99px" width="9.5" height="7.6" viewBox="0 0 9.5 7.6"><path d="M0 1 H3.4 L4.2 0 H9.2 V7.4 H0 Z" fill="#dcb67a"/><path d="M0 2 H9.2" stroke="#e9cf9f" stroke-width="0.6"/></svg>
<div class="t " style="left:833.80px;top:146.19px;font-size:8.8px;letter-spacing:-0.599px;color:#3e3e48;">Converters</div>
<svg class="a" style="left:806.1px;top:158.9px" width="4.4" height="6.8" viewBox="0 0 4.4 6.8"><path d="M0.6 0.7 L3.6 3.4 L0.6 6.1 Z" fill="none" stroke="#3a3a44" stroke-width="1.1"/></svg>
<svg class="a" style="left:814.9000000000001px;top:159.9px" width="4.4" height="5.6" viewBox="0 0 4.4 5.6"><path d="M1.1 2.4 V1.7 A1.1 1.1 0 0 1 3.3 1.7 V2.4" stroke="#8cc8ea" stroke-width="0.8" fill="none"/><rect x="0.3" y="2.2" width="3.8" height="3" rx="0.5" fill="#5cb4e6"/></svg>
<svg class="a" style="left:820.7px;top:158.3px" width="9.5" height="7.6" viewBox="0 0 9.5 7.6"><path d="M0 1 H3.4 L4.2 0 H9.2 V7.4 H0 Z" fill="#dcb67a"/><path d="M0 2 H9.2" stroke="#e9cf9f" stroke-width="0.6"/></svg>
<div class="t " style="left:833.80px;top:158.5px;font-size:8.8px;letter-spacing:-0.529px;color:#3e3e48;">Helpers</div>
<svg class="a" style="left:806.1px;top:171.21px" width="4.4" height="6.8" viewBox="0 0 4.4 6.8"><path d="M0.6 0.7 L3.6 3.4 L0.6 6.1 Z" fill="none" stroke="#3a3a44" stroke-width="1.1"/></svg>
<svg class="a" style="left:814.9000000000001px;top:172.21px" width="4.4" height="5.6" viewBox="0 0 4.4 5.6"><path d="M1.1 2.4 V1.7 A1.1 1.1 0 0 1 3.3 1.7 V2.4" stroke="#8cc8ea" stroke-width="0.8" fill="none"/><rect x="0.3" y="2.2" width="3.8" height="3" rx="0.5" fill="#5cb4e6"/></svg>
<svg class="a" style="left:820.7px;top:170.61px" width="9.5" height="7.6" viewBox="0 0 9.5 7.6"><path d="M0 1 H3.4 L4.2 0 H9.2 V7.4 H0 Z" fill="#dcb67a"/><path d="M0 2 H9.2" stroke="#e9cf9f" stroke-width="0.6"/></svg>
<div class="t " style="left:833.80px;top:170.81px;font-size:8.8px;letter-spacing:-0.394px;color:#3e3e48;">Models</div>
<svg class="a" style="left:806.1px;top:183.52px" width="4.4" height="6.8" viewBox="0 0 4.4 6.8"><path d="M0.6 0.7 L3.6 3.4 L0.6 6.1 Z" fill="none" stroke="#3a3a44" stroke-width="1.1"/></svg>
<svg class="a" style="left:814.9000000000001px;top:184.52px" width="4.4" height="5.6" viewBox="0 0 4.4 5.6"><path d="M1.1 2.4 V1.7 A1.1 1.1 0 0 1 3.3 1.7 V2.4" stroke="#8cc8ea" stroke-width="0.8" fill="none"/><rect x="0.3" y="2.2" width="3.8" height="3" rx="0.5" fill="#5cb4e6"/></svg>
<svg class="a" style="left:820.7px;top:182.92000000000002px" width="9.5" height="7.6" viewBox="0 0 9.5 7.6"><path d="M0 1 H3.4 L4.2 0 H9.2 V7.4 H0 Z" fill="#dcb67a"/><path d="M0 2 H9.2" stroke="#e9cf9f" stroke-width="0.6"/></svg>
<div class="t " style="left:833.80px;top:183.12px;font-size:8.8px;letter-spacing:-0.799px;color:#3e3e48;">Services</div>
<svg class="a" style="left:806.1px;top:195.83px" width="4.4" height="6.8" viewBox="0 0 4.4 6.8"><path d="M0.6 0.7 L3.6 3.4 L0.6 6.1 Z" fill="none" stroke="#3a3a44" stroke-width="1.1"/></svg>
<svg class="a" style="left:814.9000000000001px;top:196.83px" width="4.4" height="5.6" viewBox="0 0 4.4 5.6"><path d="M1.1 2.4 V1.7 A1.1 1.1 0 0 1 3.3 1.7 V2.4" stroke="#8cc8ea" stroke-width="0.8" fill="none"/><rect x="0.3" y="2.2" width="3.8" height="3" rx="0.5" fill="#5cb4e6"/></svg>
<svg class="a" style="left:820.7px;top:195.23000000000002px" width="9.5" height="7.6" viewBox="0 0 9.5 7.6"><path d="M0 1 H3.4 L4.2 0 H9.2 V7.4 H0 Z" fill="#dcb67a"/><path d="M0 2 H9.2" stroke="#e9cf9f" stroke-width="0.6"/></svg>
<div class="t " style="left:833.80px;top:195.43px;font-size:8.8px;letter-spacing:-0.432px;color:#3e3e48;">ViewModels</div>
<svg class="a" style="left:806.1px;top:208.14000000000001px" width="4.4" height="6.8" viewBox="0 0 4.4 6.8"><path d="M0.6 0.7 L3.6 3.4 L0.6 6.1 Z" fill="none" stroke="#3a3a44" stroke-width="1.1"/></svg>
<svg class="a" style="left:814.9000000000001px;top:209.14000000000001px" width="4.4" height="5.6" viewBox="0 0 4.4 5.6"><path d="M1.1 2.4 V1.7 A1.1 1.1 0 0 1 3.3 1.7 V2.4" stroke="#8cc8ea" stroke-width="0.8" fill="none"/><rect x="0.3" y="2.2" width="3.8" height="3" rx="0.5" fill="#5cb4e6"/></svg>
<div class="t" style="left:821.3000000000001px;top:207.94000000000003px;font-size:7px;font-weight:bold;color:#3a9a48;letter-spacing:-0.3px">C#</div>
<div class="t " style="left:833.80px;top:207.74px;font-size:8.8px;letter-spacing:-0.589px;color:#3e3e48;">Settings.cs</div>
<svg class="a" style="left:794.8px;top:221.45000000000002px" width="5" height="5" viewBox="0 0 5 5"><path d="M4.6 0.2 V4.6 H0.2 Z" fill="#26262c"/></svg>
<svg class="a" style="left:804.1999999999999px;top:221.45000000000002px" width="4" height="4.6" viewBox="0 0 4 4.6"><path d="M0.5 2.4 L1.5 3.8 L3.5 0.5" stroke="#d02a20" stroke-width="1.2" fill="none"/></svg>
<svg class="a" style="left:808.4px;top:219.85000000000002px" width="10" height="8" viewBox="0 0 10 8"><rect x="0.5" y="0.5" width="9" height="7" fill="#eef3ec" stroke="#82b884" stroke-width="1.3"/><text x="1.6" y="6" font-family="Liberation Sans" font-size="4.8" font-weight="bold" fill="#2a2a30">C#</text></svg>
<div class="t " style="left:821.30px;top:220.05px;font-size:8.8px;letter-spacing:-0.497px;color:#3e3e48;">CouponReader.Wpf.Core.Module</div>
<svg class="a" style="left:806.1px;top:232.76px" width="4.4" height="6.8" viewBox="0 0 4.4 6.8"><path d="M0.6 0.7 L3.6 3.4 L0.6 6.1 Z" fill="none" stroke="#3a3a44" stroke-width="1.1"/></svg>
<svg class="a" style="left:820.7px;top:232.16px" width="10" height="8" viewBox="0 0 10 8"><rect x="5.6" y="0.2" width="3.6" height="3" fill="#2a2a30"/><rect x="0.4" y="2.4" width="3" height="2.6" fill="#2a2a30"/><rect x="4" y="4.8" width="3.2" height="2.8" fill="#2a2a30"/><path d="M1.6 5 L3 7.2 M3.4 3.6 L5.8 2.4 M6.8 3.2 L5.8 4.8" stroke="#55555e" stroke-width="0.7" stroke-dasharray="0.9 0.6"/></svg>
<div class="t " style="left:833.80px;top:232.35999999999999px;font-size:8.8px;letter-spacing:-0.510px;color:#3e3e48;">Dependencies</div>
<svg class="a" style="left:806.1px;top:245.07px" width="4.4" height="6.8" viewBox="0 0 4.4 6.8"><path d="M0.6 0.7 L3.6 3.4 L0.6 6.1 Z" fill="none" stroke="#3a3a44" stroke-width="1.1"/></svg>
<svg class="a" style="left:814.9000000000001px;top:246.07px" width="4.4" height="5.6" viewBox="0 0 4.4 5.6"><path d="M1.1 2.4 V1.7 A1.1 1.1 0 0 1 3.3 1.7 V2.4" stroke="#8cc8ea" stroke-width="0.8" fill="none"/><rect x="0.3" y="2.2" width="3.8" height="3" rx="0.5" fill="#5cb4e6"/></svg>
<svg class="a" style="left:820.7px;top:244.47px" width="9.5" height="7.6" viewBox="0 0 9.5 7.6"><path d="M0 1 H3.4 L4.2 0 H9.2 V7.4 H0 Z" fill="#dcb67a"/><path d="M0 2 H9.2" stroke="#e9cf9f" stroke-width="0.6"/></svg>
<div class="t " style="left:833.80px;top:244.67px;font-size:8.8px;letter-spacing:-0.799px;color:#3e3e48;">Services</div>
<svg class="a" style="left:806.1px;top:257.38px" width="4.4" height="6.8" viewBox="0 0 4.4 6.8"><path d="M0.6 0.7 L3.6 3.4 L0.6 6.1 Z" fill="none" stroke="#3a3a44" stroke-width="1.1"/></svg>
<svg class="a" style="left:814.9000000000001px;top:258.38px" width="4.4" height="5.6" viewBox="0 0 4.4 5.6"><path d="M1.1 2.4 V1.7 A1.1 1.1 0 0 1 3.3 1.7 V2.4" stroke="#8cc8ea" stroke-width="0.8" fill="none"/><rect x="0.3" y="2.2" width="3.8" height="3" rx="0.5" fill="#5cb4e6"/></svg>
<svg class="a" style="left:820.7px;top:256.78px" width="9.5" height="7.6" viewBox="0 0 9.5 7.6"><path d="M0 1 H3.4 L4.2 0 H9.2 V7.4 H0 Z" fill="#dcb67a"/><path d="M0 2 H9.2" stroke="#e9cf9f" stroke-width="0.6"/></svg>
<div class="t " style="left:833.80px;top:256.97999999999996px;font-size:8.8px;letter-spacing:-0.432px;color:#3e3e48;">ViewModels</div>
<svg class="a" style="left:806.1px;top:269.69000000000005px" width="4.4" height="6.8" viewBox="0 0 4.4 6.8"><path d="M0.6 0.7 L3.6 3.4 L0.6 6.1 Z" fill="none" stroke="#3a3a44" stroke-width="1.1"/></svg>
<svg class="a" style="left:814.9000000000001px;top:270.69000000000005px" width="4.4" height="5.6" viewBox="0 0 4.4 5.6"><path d="M1.1 2.4 V1.7 A1.1 1.1 0 0 1 3.3 1.7 V2.4" stroke="#8cc8ea" stroke-width="0.8" fill="none"/><rect x="0.3" y="2.2" width="3.8" height="3" rx="0.5" fill="#5cb4e6"/></svg>
<svg class="a" style="left:820.7px;top:269.09000000000003px" width="9.5" height="7.6" viewBox="0 0 9.5 7.6"><path d="M0 1 H3.4 L4.2 0 H9.2 V7.4 H0 Z" fill="#dcb67a"/><path d="M0 2 H9.2" stroke="#e9cf9f" stroke-width="0.6"/></svg>
<div class="t " style="left:833.80px;top:269.29px;font-size:8.8px;letter-spacing:-0.854px;color:#3e3e48;">Views</div>
<svg class="a" style="left:806.1px;top:282.0px" width="4.4" height="6.8" viewBox="0 0 4.4 6.8"><path d="M0.6 0.7 L3.6 3.4 L0.6 6.1 Z" fill="none" stroke="#3a3a44" stroke-width="1.1"/></svg>
<svg class="a" style="left:814.9000000000001px;top:283.0px" width="4.4" height="5.6" viewBox="0 0 4.4 5.6"><path d="M1.1 2.4 V1.7 A1.1 1.1 0 0 1 3.3 1.7 V2.4" stroke="#8cc8ea" stroke-width="0.8" fill="none"/><rect x="0.3" y="2.2" width="3.8" height="3" rx="0.5" fill="#5cb4e6"/></svg>
<div class="t" style="left:821.3000000000001px;top:281.79999999999995px;font-size:7px;font-weight:bold;color:#3a9a48;letter-spacing:-0.3px">C#</div>
<div class="t " style="left:833.80px;top:281.59999999999997px;font-size:8.8px;letter-spacing:-0.530px;color:#3e3e48;">CouponReaderModule.cs</div>
<svg class="a" style="left:806.1px;top:294.31000000000006px" width="4.4" height="6.8" viewBox="0 0 4.4 6.8"><path d="M0.6 0.7 L3.6 3.4 L0.6 6.1 Z" fill="none" stroke="#3a3a44" stroke-width="1.1"/></svg>
<svg class="a" style="left:814.9000000000001px;top:295.31000000000006px" width="4.4" height="5.6" viewBox="0 0 4.4 5.6"><path d="M1.1 2.4 V1.7 A1.1 1.1 0 0 1 3.3 1.7 V2.4" stroke="#8cc8ea" stroke-width="0.8" fill="none"/><rect x="0.3" y="2.2" width="3.8" height="3" rx="0.5" fill="#5cb4e6"/></svg>
<div class="t" style="left:821.3000000000001px;top:294.11px;font-size:7px;font-weight:bold;color:#3a9a48;letter-spacing:-0.3px">C#</div>
<div class="t " style="left:833.80px;top:293.91px;font-size:8.8px;letter-spacing:-0.631px;color:#3e3e48;">RegionNames.cs</div>
<svg class="a" style="left:782.5px;top:307.62px" width="5" height="5" viewBox="0 0 5 5"><path d="M4.6 0.2 V4.6 H0.2 Z" fill="#26262c"/></svg>
<svg class="a" style="left:796.1px;top:306.02px" width="10" height="8" viewBox="0 0 10 8"><path d="M0.5 7.2 V1.6 H3.4 L4.2 0.6 H8.2 V3" fill="#f6ecd8" stroke="#e2c9a0" stroke-width="0.8"/><path d="M0.5 7.4 L2 3.2 H9.6 L8 7.4 Z" fill="#ead0a2" stroke="#dcbc8a" stroke-width="0.7"/></svg>
<div class="t " style="left:809.70px;top:306.21999999999997px;font-size:8.8px;letter-spacing:-0.351px;color:#3e3e48;">Solution Items</div>
<svg class="a" style="left:802.6px;top:319.93000000000006px" width="4.4" height="5.6" viewBox="0 0 4.4 5.6"><path d="M1.1 2.4 V1.7 A1.1 1.1 0 0 1 3.3 1.7 V2.4" stroke="#8cc8ea" stroke-width="0.8" fill="none"/><rect x="0.3" y="2.2" width="3.8" height="3" rx="0.5" fill="#5cb4e6"/></svg>
<svg class="a" style="left:808.4px;top:317.33000000000004px" width="10" height="10" viewBox="0 0 10 10"><path d="M9.2 2.6 A2.7 2.7 0 0 1 5.6 5.4 L2 9.2 A0.9 0.9 0 0 1 0.8 8 L4.6 4.4 A2.7 2.7 0 0 1 7.4 0.8 L5.9 2.4 L6.4 3.6 L7.6 4.1 Z" fill="#26262c" stroke="#26262c" stroke-width="0.5"/></svg>
<div class="t " style="left:821.30px;top:318.53000000000003px;font-size:8.8px;letter-spacing:-0.306px;color:#3e3e48;">Directory.Build.props</div>
<svg class="a" style="left:802.6px;top:332.24px" width="4.4" height="5.6" viewBox="0 0 4.4 5.6"><path d="M1.1 2.4 V1.7 A1.1 1.1 0 0 1 3.3 1.7 V2.4" stroke="#8cc8ea" stroke-width="0.8" fill="none"/><rect x="0.3" y="2.2" width="3.8" height="3" rx="0.5" fill="#5cb4e6"/></svg>
<svg class="a" style="left:808.4px;top:330.03999999999996px" width="9" height="9.4" viewBox="0 0 9 9.4"><path d="M2 0.5 H6 L8.4 2.9 V8.5 H2 Z" fill="#f8f8fa" stroke="#55555f" stroke-width="0.9"/><path d="M6 0.5 V2.9 H8.4" fill="none" stroke="#55555f" stroke-width="0.7"/><path d="M0.4 3.2 V4.8 M0.4 4 H3.4 M3.4 3 V5.2 M1.8 5 V7.4" stroke="#26262c" stroke-width="0.9"/></svg>
<div class="t " style="left:821.30px;top:330.84px;font-size:8.8px;letter-spacing:-0.433px;color:#3e3e48;">NuGet.config</div>
<svg class="a" style="left:782.5px;top:344.55000000000007px" width="5" height="5" viewBox="0 0 5 5"><path d="M4.6 0.2 V4.6 H0.2 Z" fill="#26262c"/></svg>
<svg class="a" style="left:796.1px;top:342.95000000000005px" width="10" height="8" viewBox="0 0 10 8"><path d="M0.5 7.2 V1.6 H3.4 L4.2 0.6 H8.2 V3" fill="#f6ecd8" stroke="#e2c9a0" stroke-width="0.8"/><path d="M0.5 7.4 L2 3.2 H9.6 L8 7.4 Z" fill="#ead0a2" stroke="#dcbc8a" stroke-width="0.7"/></svg>
<div class="t " style="left:809.70px;top:343.15000000000003px;font-size:8.8px;letter-spacing:-0.810px;color:#3e3e48;">Tests</div>
<svg class="a" style="left:794.8px;top:356.86px" width="5" height="5" viewBox="0 0 5 5"><path d="M4.6 0.2 V4.6 H0.2 Z" fill="#26262c"/></svg>
<svg class="a" style="left:804.1999999999999px;top:356.86px" width="4" height="4.6" viewBox="0 0 4 4.6"><path d="M0.5 2.4 L1.5 3.8 L3.5 0.5" stroke="#d02a20" stroke-width="1.2" fill="none"/></svg>
<svg class="a" style="left:808.4px;top:355.26px" width="10" height="8.4" viewBox="0 0 10 8.4"><rect x="0.5" y="0.8" width="9" height="7" fill="#f4f4f6" stroke="#4a4a54" stroke-width="0.8"/><path d="M0.2 0.9 H9.8" stroke="#2a2a30" stroke-width="1.2"/><rect x="0.6" y="1.6" width="5.8" height="6" fill="#3f9a4a"/><path d="M3 2.4 H4.4 V3.8 L5.6 6.6 H1.8 L3 3.8 Z" fill="#f2f8f2"/></svg>
<div class="t " style="left:821.30px;top:355.46px;font-size:8.8px;letter-spacing:-0.530px;color:#3e3e48;">CouponReader.UnitTests</div>
<svg class="a" style="left:806.1px;top:368.17px" width="4.4" height="6.8" viewBox="0 0 4.4 6.8"><path d="M0.6 0.7 L3.6 3.4 L0.6 6.1 Z" fill="none" stroke="#3a3a44" stroke-width="1.1"/></svg>
<svg class="a" style="left:820.7px;top:367.57px" width="10" height="8" viewBox="0 0 10 8"><rect x="5.6" y="0.2" width="3.6" height="3" fill="#2a2a30"/><rect x="0.4" y="2.4" width="3" height="2.6" fill="#2a2a30"/><rect x="4" y="4.8" width="3.2" height="2.8" fill="#2a2a30"/><path d="M1.6 5 L3 7.2 M3.4 3.6 L5.8 2.4 M6.8 3.2 L5.8 4.8" stroke="#55555e" stroke-width="0.7" stroke-dasharray="0.9 0.6"/></svg>
<div class="t " style="left:833.80px;top:367.77px;font-size:8.8px;letter-spacing:-0.510px;color:#3e3e48;">Dependencies</div>
<svg class="a" style="left:806.1px;top:380.48px" width="4.4" height="6.8" viewBox="0 0 4.4 6.8"><path d="M0.6 0.7 L3.6 3.4 L0.6 6.1 Z" fill="none" stroke="#3a3a44" stroke-width="1.1"/></svg>
<svg class="a" style="left:814.9000000000001px;top:381.48px" width="4.4" height="5.6" viewBox="0 0 4.4 5.6"><path d="M1.1 2.4 V1.7 A1.1 1.1 0 0 1 3.3 1.7 V2.4" stroke="#8cc8ea" stroke-width="0.8" fill="none"/><rect x="0.3" y="2.2" width="3.8" height="3" rx="0.5" fill="#5cb4e6"/></svg>
<div class="t" style="left:821.3000000000001px;top:380.28px;font-size:7px;font-weight:bold;color:#3a9a48;letter-spacing:-0.3px">C#</div>
<div class="t " style="left:833.80px;top:380.08px;font-size:8.8px;letter-spacing:-0.674px;color:#3e3e48;">CouponsServiceTests.cs</div>
<svg class="a" style="left:782.5px;top:393.79px" width="5" height="5" viewBox="0 0 5 5"><path d="M4.6 0.2 V4.6 H0.2 Z" fill="#26262c"/></svg>
<svg class="a" style="left:791.9px;top:393.79px" width="4" height="4.6" viewBox="0 0 4 4.6"><path d="M0.5 2.4 L1.5 3.8 L3.5 0.5" stroke="#d02a20" stroke-width="1.2" fill="none"/></svg>
<svg class="a" style="left:796.1px;top:392.19px" width="10" height="8" viewBox="0 0 10 8"><rect x="0.5" y="0.5" width="9" height="7" fill="#eef3ec" stroke="#82b884" stroke-width="1.3"/><text x="1.6" y="6" font-family="Liberation Sans" font-size="4.8" font-weight="bold" fill="#2a2a30">C#</text></svg>
<div class="t " style="left:809.70px;top:392.39px;font-size:8.8px;letter-spacing:-0.587px;font-weight:bold;color:#2c2c36;">CouponReader.Core.Wpf</div>
<svg class="a" style="left:793.8px;top:405.1px" width="4.4" height="6.8" viewBox="0 0 4.4 6.8"><path d="M0.6 0.7 L3.6 3.4 L0.6 6.1 Z" fill="none" stroke="#3a3a44" stroke-width="1.1"/></svg>
<svg class="a" style="left:808.4px;top:404.5px" width="10" height="8" viewBox="0 0 10 8"><rect x="5.6" y="0.2" width="3.6" height="3" fill="#2a2a30"/><rect x="0.4" y="2.4" width="3" height="2.6" fill="#2a2a30"/><rect x="4" y="4.8" width="3.2" height="2.8" fill="#2a2a30"/><path d="M1.6 5 L3 7.2 M3.4 3.6 L5.8 2.4 M6.8 3.2 L5.8 4.8" stroke="#55555e" stroke-width="0.7" stroke-dasharray="0.9 0.6"/></svg>
<div class="t " style="left:821.30px;top:404.7px;font-size:8.8px;letter-spacing:-0.488px;color:#3e3e48;">Dependencies</div>
<svg class="a" style="left:793.8px;top:417.41px" width="4.4" height="6.8" viewBox="0 0 4.4 6.8"><path d="M0.6 0.7 L3.6 3.4 L0.6 6.1 Z" fill="none" stroke="#3a3a44" stroke-width="1.1"/></svg>
<svg class="a" style="left:802.6px;top:418.41px" width="4.4" height="5.6" viewBox="0 0 4.4 5.6"><path d="M1.1 2.4 V1.7 A1.1 1.1 0 0 1 3.3 1.7 V2.4" stroke="#8cc8ea" stroke-width="0.8" fill="none"/><rect x="0.3" y="2.2" width="3.8" height="3" rx="0.5" fill="#5cb4e6"/></svg>
<svg class="a" style="left:808.4px;top:415.81px" width="10" height="10" viewBox="0 0 10 10"><path d="M9.2 2.6 A2.7 2.7 0 0 1 5.6 5.4 L2 9.2 A0.9 0.9 0 0 1 0.8 8 L4.6 4.4 A2.7 2.7 0 0 1 7.4 0.8 L5.9 2.4 L6.4 3.6 L7.6 4.1 Z" fill="#26262c" stroke="#26262c" stroke-width="0.5"/></svg>
<div class="t " style="left:821.30px;top:417.01px;font-size:8.8px;letter-spacing:-0.468px;color:#3e3e48;">Properties</div>
<svg class="a" style="left:793.8px;top:429.72px" width="4.4" height="6.8" viewBox="0 0 4.4 6.8"><path d="M0.6 0.7 L3.6 3.4 L0.6 6.1 Z" fill="none" stroke="#3a3a44" stroke-width="1.1"/></svg>
<svg class="a" style="left:802.6px;top:430.72px" width="4.4" height="5.6" viewBox="0 0 4.4 5.6"><path d="M1.1 2.4 V1.7 A1.1 1.1 0 0 1 3.3 1.7 V2.4" stroke="#8cc8ea" stroke-width="0.8" fill="none"/><rect x="0.3" y="2.2" width="3.8" height="3" rx="0.5" fill="#5cb4e6"/></svg>
<svg class="a" style="left:808.4px;top:429.12px" width="9.5" height="7.6" viewBox="0 0 9.5 7.6"><path d="M0 1 H3.4 L4.2 0 H9.2 V7.4 H0 Z" fill="#dcb67a"/><path d="M0 2 H9.2" stroke="#e9cf9f" stroke-width="0.6"/></svg>
<div class="t " style="left:821.30px;top:429.32px;font-size:8.8px;letter-spacing:-0.802px;color:#3e3e48;">Resources</div>
<svg class="a" style="left:802.6px;top:443.03000000000003px" width="4.4" height="5.6" viewBox="0 0 4.4 5.6"><path d="M1.1 2.4 V1.7 A1.1 1.1 0 0 1 3.3 1.7 V2.4" stroke="#8cc8ea" stroke-width="0.8" fill="none"/><rect x="0.3" y="2.2" width="3.8" height="3" rx="0.5" fill="#5cb4e6"/></svg>
<svg class="a" style="left:808.4px;top:440.83px" width="9" height="9.4" viewBox="0 0 9 9.4"><path d="M2 0.5 H6 L8.4 2.9 V8.5 H2 Z" fill="#f8f8fa" stroke="#55555f" stroke-width="0.9"/><path d="M6 0.5 V2.9 H8.4" fill="none" stroke="#55555f" stroke-width="0.7"/><path d="M0.4 3.2 V4.8 M0.4 4 H3.4 M3.4 3 V5.2 M1.8 5 V7.4" stroke="#26262c" stroke-width="0.9"/></svg>
<div class="t " style="left:821.30px;top:441.63px;font-size:8.8px;letter-spacing:-0.243px;color:#3e3e48;">App.config</div>
<svg class="a" style="left:793.8px;top:454.34000000000003px" width="4.4" height="6.8" viewBox="0 0 4.4 6.8"><path d="M0.6 0.7 L3.6 3.4 L0.6 6.1 Z" fill="none" stroke="#3a3a44" stroke-width="1.1"/></svg>
<svg class="a" style="left:808.4px;top:453.14px" width="9" height="9.4" viewBox="0 0 9 9.4"><path d="M2 0.5 H6 L8.4 2.9 V8.5 H2 Z" fill="#f8f8fa" stroke="#55555f" stroke-width="0.9"/><path d="M6 0.5 V2.9 H8.4" fill="none" stroke="#55555f" stroke-width="0.7"/><path d="M0.6 6.8 H4.6 V9 H0.6 Z" fill="#3a8ad0"/></svg>
<div class="t " style="left:821.30px;top:453.94px;font-size:8.8px;letter-spacing:-0.398px;color:#3e3e48;">App.xaml</div>
<svg class="a" style="left:793.8px;top:466.65000000000003px" width="4.4" height="6.8" viewBox="0 0 4.4 6.8"><path d="M0.6 0.7 L3.6 3.4 L0.6 6.1 Z" fill="none" stroke="#3a3a44" stroke-width="1.1"/></svg>
<svg class="a" style="left:802.6px;top:467.65000000000003px" width="4.4" height="5.6" viewBox="0 0 4.4 5.6"><path d="M1.1 2.4 V1.7 A1.1 1.1 0 0 1 3.3 1.7 V2.4" stroke="#8cc8ea" stroke-width="0.8" fill="none"/><rect x="0.3" y="2.2" width="3.8" height="3" rx="0.5" fill="#5cb4e6"/></svg>
<svg class="a" style="left:808.4px;top:465.45px" width="9" height="9.4" viewBox="0 0 9 9.4"><path d="M2 0.5 H6 L8.4 2.9 V8.5 H2 Z" fill="#f8f8fa" stroke="#55555f" stroke-width="0.9"/><path d="M6 0.5 V2.9 H8.4" fill="none" stroke="#55555f" stroke-width="0.7"/><path d="M0.6 6.8 H4.6 V9 H0.6 Z" fill="#3a8ad0"/></svg>
<div class="t " style="left:821.30px;top:466.25px;font-size:8.8px;letter-spacing:-0.522px;color:#3e3e48;">Shell.xaml</div>
<svg class="a" style="left:802.6px;top:479.96000000000004px" width="4.4" height="5.6" viewBox="0 0 4.4 5.6"><path d="M1.1 2.4 V1.7 A1.1 1.1 0 0 1 3.3 1.7 V2.4" stroke="#8cc8ea" stroke-width="0.8" fill="none"/><rect x="0.3" y="2.2" width="3.8" height="3" rx="0.5" fill="#5cb4e6"/></svg>
<svg class="a" style="left:808.4px;top:477.76px" width="9" height="9.4" viewBox="0 0 9 9.4"><path d="M2 0.5 H6 L8.4 2.9 V8.5 H2 Z" fill="#f8f8fa" stroke="#55555f" stroke-width="0.9"/><path d="M6 0.5 V2.9 H8.4" fill="none" stroke="#55555f" stroke-width="0.7"/><path d="M3.6 5 L5.4 6 L3.6 7 Z" fill="#4a4a54"/></svg>
<div class="t " style="left:821.30px;top:478.56px;font-size:8.8px;letter-spacing:-0.221px;color:#3e3e48;">tail.ico</div>
<div class="a" style="left:775px;top:497px;width:32.5px;height:13px;background:#969ecd;"></div>
<div class="t " style="left:778.45px;top:500.2px;font-size:8.8px;letter-spacing:-0.628px;color:#2e2e42;">GitHub</div>
<div class="a" style="left:808px;top:497px;width:67.5px;height:13px;background:#f1f1f4;"></div>
<div class="t " style="left:811.45px;top:500.2px;font-size:8.8px;letter-spacing:-0.392px;color:#2e2e42;">Solution Explorer</div>
<div class="a" style="left:876px;top:497px;width:57px;height:13px;background:#969ecd;"></div>
<div class="t " style="left:880.00px;top:500.2px;font-size:8.8px;letter-spacing:-0.478px;color:#2e2e42;">Team Explorer</div>
<div class="t" style="left:1020.6px;top:43.900000000000006px;transform-origin:0 0;transform:rotate(90deg);font-size:8.6px;letter-spacing:-0.112px;color:#d6daf0">Notifications</div>
<div class="t" style="left:1020.6px;top:97.3px;transform-origin:0 0;transform:rotate(90deg);font-size:8.6px;letter-spacing:-0.422px;color:#d6daf0">Properties</div>
<div class="t " style="left:19.20px;top:516px;font-size:8.6px;letter-spacing:-0.063px;color:#e8ebf8;">Output</div>
<div class="t " style="left:51.70px;top:516px;font-size:8.6px;letter-spacing:-0.320px;color:#e8ebf8;">Error List</div>
<div class="a" style="left:19.5px;top:527px;width:25px;height:4px;background:#dfe3f6;"></div>
<div class="a" style="left:52px;top:527px;width:31.5px;height:4px;background:#dfe3f6;"></div>
<svg class="a" style="left:1.5px;top:536px" width="11" height="8" viewBox="0 0 11 8"><path d="M2.2 0.6 H10.2 L8.6 7.4 H0.6 Z" fill="none" stroke="#dfe3f6" stroke-width="0.9"/></svg>
<div class="t " style="left:16.70px;top:536px;font-size:8.6px;letter-spacing:-0.653px;color:#e8ebf8;">Ready</div>
<div class="t " style="left:416.00px;top:536px;font-size:8.6px;letter-spacing:-0.461px;color:#e8ebf8;">Ln 239</div>
<div class="t " style="left:477.40px;top:536px;font-size:8.6px;letter-spacing:-0.352px;color:#e8ebf8;">Col 10</div>
<div class="t " style="left:538.70px;top:536px;font-size:8.6px;letter-spacing:-0.612px;color:#e8ebf8;">Ch 10</div>
<div class="t " style="left:630.10px;top:536px;font-size:8.6px;letter-spacing:-0.868px;color:#e8ebf8;">INS</div>
<svg class="a" style="left:657.6px;top:535.3px" width="9" height="9.6" viewBox="0 0 9 9.6"><path d="M1.6 1.2 V7.4 M7 3 V7.4 M3.4 1.6 H5.6 Q7 1.6 7 3" stroke="#e8ebf8" stroke-width="1.1" fill="none"/><path d="M4.6 0.2 L3 1.6 L4.6 3 Z" fill="#e8ebf8"/><circle cx="1.6" cy="8.2" r="1" fill="none" stroke="#e8ebf8" stroke-width="0.7"/><circle cx="7" cy="8.2" r="1" fill="none" stroke="#e8ebf8" stroke-width="0.7"/><circle cx="1.6" cy="1" r="0.8" fill="#e8ebf8"/></svg>
<svg class="a" style="left:680px;top:536px" width="7" height="8" viewBox="0 0 7 8"><path d="M3.5 0.4 L6.8 3.8 H4.6 V7.6 H2.4 V3.8 H0.2 Z" fill="#e8ebf8"/></svg>
<div class="t " style="left:692.20px;top:536px;font-size:8.6px;letter-spacing:-0.283px;color:#e8ebf8;">0</div>
<svg class="a" style="left:713px;top:536px" width="9" height="8" viewBox="0 0 9 8"><path d="M0.4 7.6 L1 5.4 L6 0.6 L7.8 2.4 L2.8 7.2 Z" fill="#e8ebf8"/></svg>
<div class="t " style="left:725.70px;top:536px;font-size:8.6px;letter-spacing:-0.283px;color:#e8ebf8;">5</div>
<svg class="a" style="left:746px;top:535.5px" width="9" height="9" viewBox="0 0 9 9"><path d="M4.5 0.3 L8.7 4.5 L4.5 8.7 L0.3 4.5 Z" fill="#e8ebf8"/><path d="M3.4 2.8 L5.6 5 M4.4 3.6 V6.6" stroke="#5d689e" stroke-width="0.9"/></svg>
<div class="t " style="left:759.40px;top:536px;font-size:8.6px;letter-spacing:-0.269px;color:#e8ebf8;">TailwindTraders-Desktop.git</div>
<svg class="a" style="left:874px;top:535.5px" width="9" height="9" viewBox="0 0 9 9"><circle cx="1.8" cy="1.6" r="1.3" fill="#e8ebf8"/><circle cx="7.2" cy="1.6" r="1.3" fill="#e8ebf8"/><path d="M1.8 2 L4.5 5.4 L7.2 2 M4.5 5.4 V8.6" stroke="#e8ebf8" stroke-width="1.1" fill="none"/></svg>
<div class="t " style="left:887.70px;top:536px;font-size:8.6px;letter-spacing:-0.557px;color:#e8ebf8;">master</div>
<svg class="a" style="left:915.8px;top:538px" width="4.4" height="3.4" viewBox="0 0 4.4 3.4"><path d="M0 3.4 L2.2 0 L4.4 3.4 Z" fill="#e8ebf8"/></svg>
<svg class="a" style="left:939.5px;top:536px" width="9" height="8" viewBox="0 0 9 8"><path d="M0.5 1 H3.4 L4.2 2 H8.4 V7 H0.5 Z" fill="none" stroke="#e8ebf8" stroke-width="0.9"/><path d="M0.5 3.2 H8.4" stroke="#e8ebf8" stroke-width="0.8"/></svg>
<div class="t " style="left:954.70px;top:536px;font-size:8.6px;letter-spacing:-0.457px;color:#e8ebf8;">CouponReader.WPF</div>
<div class="a" style="left:0px;top:547.5px;width:1024px;height:25.5px;background:#171b26;"></div>
<svg class="a" style="left:9px;top:555.5px" width="11" height="11" viewBox="0 0 11 11"><path d="M0 1.6 L4.6 0.9 V5.2 H0 Z M5.3 0.8 L11 0 V5.2 H5.3 Z M0 5.9 H4.6 V10.2 L0 9.5 Z M5.3 5.9 H11 V11 L5.3 10.2 Z" fill="#f2f2f2"/></svg>
<svg class="a" style="left:40.5px;top:555.5px" width="11" height="11" viewBox="0 0 11 11"><circle cx="5.5" cy="5.5" r="4.4" fill="none" stroke="#f2f2f2" stroke-width="1.4"/></svg>
<svg class="a" style="left:73px;top:556px" width="12" height="10" viewBox="0 0 12 10"><rect x="1.6" y="2.6" width="5.4" height="4.8" fill="none" stroke="#e0e0e0" stroke-width="1"/><path d="M0.4 0.7 H8.2 M0.4 9.3 H8.2" stroke="#e0e0e0" stroke-width="1"/><path d="M10.6 3 V9.6" stroke="#e0e0e0" stroke-width="1.1"/><circle cx="10.6" cy="1" r="0.7" fill="#e0e0e0"/></svg>
<svg class="a" style="left:106px;top:554px" width="14" height="14" viewBox="0 0 14 14"><path d="M1 6.4 C1.6 1.2 7.4 -0.6 11.2 2.4 C13 4 13.2 6 13 8.2 H4.8 C5 10.4 8 11.6 12.4 10 V12.6 C7.4 14.6 1.8 13 1.6 8 C1.6 5 4 3.4 6.6 3.4 C4 4 2 5.2 1 6.4 Z M4.9 6 H9.6 C9.4 3.6 5.4 3.4 4.9 6 Z" fill="#1f8ee6" fill-rule="evenodd"/></svg>
<div class="a" style="left:100px;top:572px;width:28px;height:1px;background:#6a9fd6;"></div>
<svg class="a" style="left:139px;top:554.5px" width="16" height="13" viewBox="0 0 16 13"><path d="M0.5 1.2 H6 L7.2 2.6 H15.5 V12.4 H0.5 Z" fill="#e9b93c"/><path d="M0.5 4.4 H15.5 V12.4 H0.5 Z" fill="#f6d566"/><path d="M4 8 H12 V12.4 H4 Z" fill="#5aa6e0"/><path d="M5.4 9.4 H10.6 V12.4 H5.4 Z" fill="#f6e08c"/></svg>
<div class="a" style="left:164px;top:547.5px;width:32.5px;height:25.5px;background:#3a3e4a;"></div>
<svg class="a" style="left:169px;top:551.5px" width="24" height="18" viewBox="0 0 24 18"><g transform="translate(-5.2,-0.4) scale(1.2)"><path d="M6.9 4.4 L16.2 11.9 M6.9 10.9 L16.2 3.3" stroke="#9a62dc" stroke-width="2.4" fill="none"/><path d="M6.6 4.8 V10.4" stroke="#9a62dc" stroke-width="1.3"/><path d="M15.9 1.9 L17.1 1.2 L19.9 2.5 V12.7 L17.1 14 L15.9 13.3 Z" fill="#8448d2"/></g></svg>
<div class="a" style="left:164px;top:572px;width:32.5px;height:1px;background:#7aa6da;"></div>
<svg class="a" style="left:203.5px;top:554px" width="18" height="14" viewBox="0 0 18 14"><rect x="4.4" y="0.6" width="12.6" height="8.6" fill="#3fa0ea"/><rect x="5.6" y="1.6" width="10.2" height="5.4" fill="#56b4f4"/><circle cx="4.4" cy="8.6" r="3" fill="#a8c4d8" stroke="#d9dde2" stroke-width="1"/><path d="M6.6 10.8 L9.2 13.4" stroke="#c9ccd2" stroke-width="1.6"/></svg>
<div class="a" style="left:199px;top:572px;width:28px;height:1px;background:#6a9fd6;"></div>
<svg class="a" style="left:860px;top:555.5px" width="11" height="11" viewBox="0 0 11 11"><circle cx="6.8" cy="3" r="2" fill="none" stroke="#e6e6e6" stroke-width="1"/><path d="M3.6 10.4 C3.6 6.4 10 6.4 10 10.4" stroke="#e6e6e6" stroke-width="1" fill="none"/><circle cx="2.6" cy="5.4" r="1.4" fill="none" stroke="#e6e6e6" stroke-width="0.9"/><path d="M0.4 10.4 C0.4 7.6 3.6 7.4 4.2 8.4" stroke="#e6e6e6" stroke-width="0.9" fill="none"/></svg>
<svg class="a" style="left:887px;top:558px" width="10" height="6" viewBox="0 0 10 6"><path d="M0.6 5.4 L5 0.8 L9.4 5.4" stroke="#e6e6e6" stroke-width="1.1" fill="none"/></svg>
<svg class="a" style="left:907.5px;top:557px" width="12" height="8" viewBox="0 0 12 8"><rect x="1.6" y="1" width="9.6" height="5.6" fill="none" stroke="#e6e6e6" stroke-width="1"/><rect x="2.8" y="2.2" width="7.2" height="3.2" fill="#e6e6e6"/><rect x="0" y="2.6" width="1.4" height="2.4" fill="#e6e6e6"/></svg>
<svg class="a" style="left:928.5px;top:556px" width="12" height="10" viewBox="0 0 12 10"><rect x="2.6" y="0.6" width="8.8" height="6.4" fill="none" stroke="#e6e6e6" stroke-width="1"/><path d="M4 9.2 H10 M0.6 3 V8.6 H3.4" stroke="#e6e6e6" stroke-width="1" fill="none"/></svg>
<svg class="a" style="left:950.5px;top:556px" width="12" height="10" viewBox="0 0 12 10"><path d="M0.6 3.4 H2.6 L5 1 V9 L2.6 6.6 H0.6 Z" fill="none" stroke="#e6e6e6" stroke-width="0.9"/><path d="M6.6 3.4 C7.6 4.4 7.6 5.6 6.6 6.6 M8.2 2 C10 3.8 10 6.2 8.2 8 M9.8 0.8 C12.2 3.4 12.2 6.6 9.8 9.2" stroke="#e6e6e6" stroke-width="0.8" fill="none"/></svg>
<svg class="a" style="left:974px;top:555.5px" width="12" height="11" viewBox="0 0 12 11"><path d="M1 10 C3 6 6 8.4 7.6 4 C8.4 1.4 11 1 11.2 2.6 C11.4 4.4 9 5.6 7 5.6 M4.4 9.8 C5.6 8 7 7.8 8.4 6.4" stroke="#e6e6e6" stroke-width="1.1" fill="none"/></svg>
<svg class="a" style="left:1001px;top:555.5px" width="12" height="11" viewBox="0 0 12 11"><path d="M0.8 0.8 H10.8 V8 H4.6 L2.4 10 V8 H0.8 Z" fill="#e6e6e6"/><path d="M2.4 2.8 H9.2 M2.4 4.6 H9.2 M2.4 6.2 H7" stroke="#171b26" stroke-width="0.7"/><circle cx="9.6" cy="8.6" r="2" fill="#171b26" stroke="#e6e6e6" stroke-width="0.8"/></svg></body></html>
